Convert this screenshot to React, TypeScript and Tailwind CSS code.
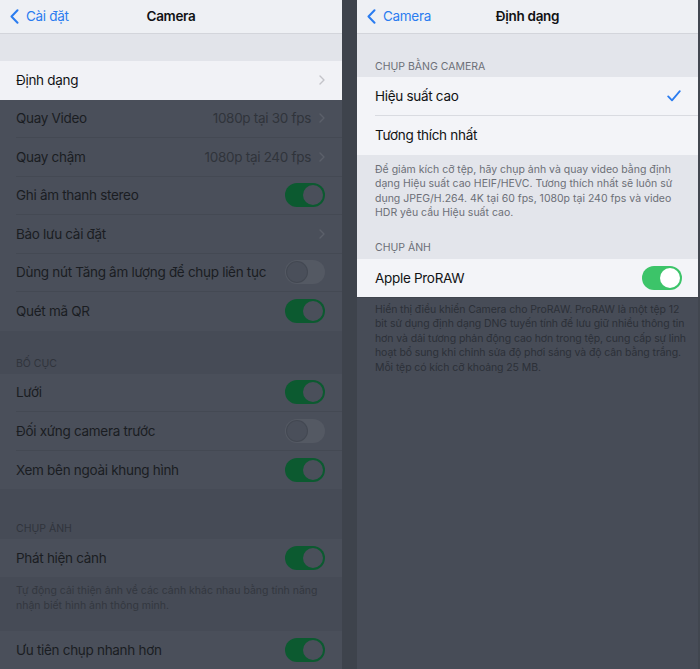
import React from "react";

function Toggle({ on, dim }: { on: boolean; dim?: boolean }) {
  const track = on
    ? dim
      ? "bg-[#0c5a30]"
      : "bg-[#3cc469]"
    : dim
      ? "bg-[#545963]"
      : "bg-[#e6e6ea]";
  const knob = dim ? "bg-[#4a4f5a]" : "bg-white";
  return (
    <div className={`flex h-[24px] w-[40px] shrink-0 items-center rounded-full p-[2px] ${track} ${on ? "justify-end" : "justify-start"}`}>
      <div className={`h-[20px] w-[20px] rounded-full ${knob} ${!on && dim ? "shadow-[0_0_0_1px_#434852]" : ""}`} />
    </div>
  );
}

function Chevron({ dim }: { dim?: boolean }) {
  return (
    <svg width="6" height="10" viewBox="0 0 6 10" className="ml-2 shrink-0">
      <path d="M1 1 L5 5 L1 9" fill="none" stroke={dim ? "#5b606a" : "#c3c4c9"} strokeWidth="1.4" strokeLinecap="round" strokeLinejoin="round" />
    </svg>
  );
}

function BackChevron() {
  return (
    <svg width="9" height="15" viewBox="0 0 9 15">
      <path d="M7.5 1.2 L1.5 7.5 L7.5 13.8" fill="none" stroke="#2a7cf0" strokeWidth="2" strokeLinecap="round" strokeLinejoin="round" />
    </svg>
  );
}

function NavBar({ back, title }: { back: string; title: string }) {
  return (
    <div className="grid h-[34px] shrink-0 grid-cols-[1fr_auto_1fr] items-center border-b border-[#d3d5db] bg-[#eef0f4] px-[10px]">
      <div className="flex items-center gap-[7px] text-[13.5px] tracking-[-0.3px] text-[#2a7cf0]">
        <BackChevron />
        <span>{back}</span>
      </div>
      <div className="text-[13.5px] font-semibold tracking-[-0.3px] text-[#111214]">{title}</div>
      <div />
    </div>
  );
}

function DimRow({
  label,
  value,
  chevron,
  toggle,
  last,
}: {
  label: string;
  value?: string;
  chevron?: boolean;
  toggle?: boolean;
  last?: boolean;
}) {
  return (
    <div className="h-[38.5px] shrink-0 bg-[#4a4f5a] pl-4">
      <div className={`flex h-full items-center pr-[17px] ${last ? "" : "border-b border-[#444953]"}`}>
        <span className="flex-1 whitespace-nowrap text-[13.5px] tracking-[-0.3px] text-[#1a1d22]">{label}</span>
        {value && <span className="whitespace-nowrap text-[13.5px] tracking-[-0.3px] text-[#30343b]">{value}</span>}
        {chevron && <Chevron dim />}
        {toggle !== undefined && <Toggle on={toggle} dim />}
      </div>
    </div>
  );
}

function DimHeader({ text, h }: { text: string; h: string }) {
  return (
    <div className={`flex shrink-0 items-end px-4 pb-[2px] ${h}`}>
      <span className="text-[10.5px] uppercase text-[#30343c]">{text}</span>
    </div>
  );
}

function LeftPanel() {
  return (
    <div className="flex w-[342px] shrink-0 flex-col">
      <NavBar back="Cài đặt" title="Camera" />
      <div className="h-[27px] shrink-0 bg-[#e2e4ea]" />
      <div className="flex h-[38.5px] shrink-0 items-center bg-[#f1f2f6] pl-4 pr-[17px]">
        <span className="flex-1 text-[13.5px] tracking-[-0.3px] text-[#111214]">Định dạng</span>
        <Chevron />
      </div>
      <div className="flex flex-1 flex-col bg-[#464b56]">
        <DimRow label="Quay Video" value="1080p tại 30 fps" chevron />
        <DimRow label="Quay chậm" value="1080p tại 240 fps" chevron />
        <DimRow label="Ghi âm thanh stereo" toggle={true} />
        <DimRow label="Bảo lưu cài đặt" chevron />
        <DimRow label="Dùng nút Tăng âm lượng để chụp liên tục" toggle={false} />
        <DimRow label="Quét mã QR" toggle={true} last />
        <DimHeader text="Bố cục" h="h-[43px]" />
        <DimRow label="Lưới" toggle={true} />
        <DimRow label="Đối xứng camera trước" toggle={false} />
        <DimRow label="Xem bên ngoài khung hình" toggle={true} last />
        <DimHeader text="Chụp ảnh" h="h-[49.5px]" />
        <DimRow label="Phát hiện cảnh" toggle={true} last />
        <div className="h-[53.5px] shrink-0 px-4 pt-[6px] text-[10.5px] leading-[15px] text-[#33373f]">
          Tự động cải thiện ảnh về các cảnh khác nhau bằng tính năng nhận biết hình ảnh thông minh.
        </div>
        <DimRow label="Ưu tiên chụp nhanh hơn" toggle={true} last />
      </div>
    </div>
  );
}

function CheckMark() {
  return (
    <svg width="14" height="12" viewBox="0 0 14 12">
      <path d="M1.2 6.4 L5 10.4 L12.8 1.2" fill="none" stroke="#2a7cf0" strokeWidth="1.8" strokeLinecap="round" strokeLinejoin="round" />
    </svg>
  );
}

function RightPanel() {
  return (
    <div className="flex w-[341px] shrink-0 flex-col">
      <NavBar back="Camera" title="Định dạng" />
      <div className="flex h-[43px] shrink-0 items-end bg-[#e3e5eb] px-[18px] pb-[2px]">
        <span className="text-[10.5px] text-[#6c6f77]">CHỤP BẰNG CAMERA</span>
      </div>
      <div className="h-[39px] shrink-0 bg-[#f3f4f8] pl-[18px]">
        <div className="flex h-full items-center border-b border-[#d9dbe1] pr-[17px]">
          <span className="flex-1 text-[13.5px] tracking-[-0.3px] text-[#111214]">Hiệu suất cao</span>
          <CheckMark />
        </div>
      </div>
      <div className="flex h-[39px] shrink-0 items-center bg-[#f3f4f8] px-[18px]">
        <span className="text-[13.5px] tracking-[-0.3px] text-[#111214]">Tương thích nhất</span>
      </div>
      <div className="flex h-[104px] shrink-0 flex-col bg-[#e3e5eb] px-[18px] pt-[8px]">
        <p className="text-[10.5px] leading-[14.4px] text-[#6c6f77]">
          Để giảm kích cỡ tệp, hãy chụp ảnh và quay video bằng định dạng Hiệu suất cao HEIF/HEVC. Tương thích nhất sẽ luôn sử dụng JPEG/H.264. 4K tại 60 fps, 1080p tại 240 fps và video HDR yêu cầu Hiệu suất cao.
        </p>
        <div className="mt-auto pb-[3px] text-[10.5px] text-[#6c6f77]">CHỤP ẢNH</div>
      </div>
      <div className="flex h-[38px] shrink-0 items-center bg-[#f3f4f8] pl-[18px] pr-[16px]">
        <span className="flex-1 text-[13.5px] tracking-[-0.3px] text-[#111214]">Apple ProRAW</span>
        <Toggle on={true} />
      </div>
      <div className="flex-1 border-t border-[#3f444d] bg-[#474c57] pl-[18px] pr-[6px] pt-[5px]">
        <p className="text-[10.5px] leading-[14.4px] tracking-[-0.1px] text-[#2c3038]">
          Hiển thị điều khiển Camera cho ProRAW. ProRAW là một tệp 12
          <br />
          bit sử dụng định dạng DNG tuyến tính để lưu giữ nhiều thông tin
          <br />
          hơn và dải tương phản động cao hơn trong tệp, cung cấp sự linh
          <br />
          hoạt bổ sung khi chỉnh sửa độ phơi sáng và độ cân bằng trắng.
          <br />
          Mỗi tệp có kích cỡ khoảng 25 MB.
        </p>
      </div>
    </div>
  );
}

export default function App() {
  return (
    <div className="flex h-[669px] w-[700px] overflow-hidden bg-[#3e434c] font-['Inter','Noto_Sans',sans-serif] antialiased">
      <LeftPanel />
      <div className="w-[15px] shrink-0" />
      <RightPanel />
      <div className="w-[2px] shrink-0 bg-[#41464f]" />
    </div>
  );
}
